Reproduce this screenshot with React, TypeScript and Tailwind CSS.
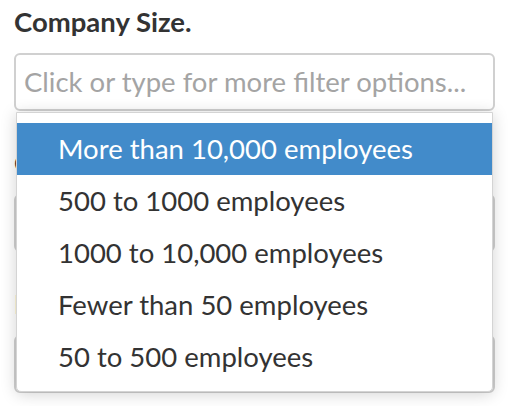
import React from 'react';

const options = [
  'More than 10,000 employees',
  '500 to 1000 employees',
  '1000 to 10,000 employees',
  'Fewer than 50 employees',
  '50 to 500 employees',
];

const Field = ({ label, children }: { label: string; children?: React.ReactNode }) => (
  <div className="relative">
    <div className="text-[27.5px] font-bold leading-[30px] text-[#333] h-[46px]">{label}</div>
    <div className="h-[58px] rounded-[6px] border-2 border-[#d0d0d0] bg-white flex items-center px-[8px] text-[27.5px] text-[#a4a4a4]">
      {children}
    </div>
  </div>
);

export default function App() {
  const [active] = React.useState(0);

  return (
    <div
      className="w-[508px] h-[406px] bg-white overflow-hidden px-[14px] pt-[7px] relative"
      style={{ fontFamily: 'Lato, "Open Sans", sans-serif' }}
    >
      <div className="flex flex-col gap-[37px] w-[481px]">
        <Field label="Company Size.">
          <span className="whitespace-nowrap">Click or type for more filter options...</span>
        </Field>
        <Field label="Country." />
        <Field label="Industry." />
      </div>

      <div className="absolute left-[16px] top-[112px] w-[477px] h-[280px] bg-white border border-[#d4d4d4] rounded-b-[5px] shadow-[0_2px_16px_rgba(0,0,0,0.18)] pt-[10px]">
        {options.map((o, i) => (
          <div
            key={o}
            className={
              'h-[52px] flex items-center pl-[41px] text-[27.5px] ' +
              (i === active ? 'bg-[#428bca] text-white' : 'text-[#333]')
            }
          >
            {o}
          </div>
        ))}
      </div>
    </div>
  );
}
